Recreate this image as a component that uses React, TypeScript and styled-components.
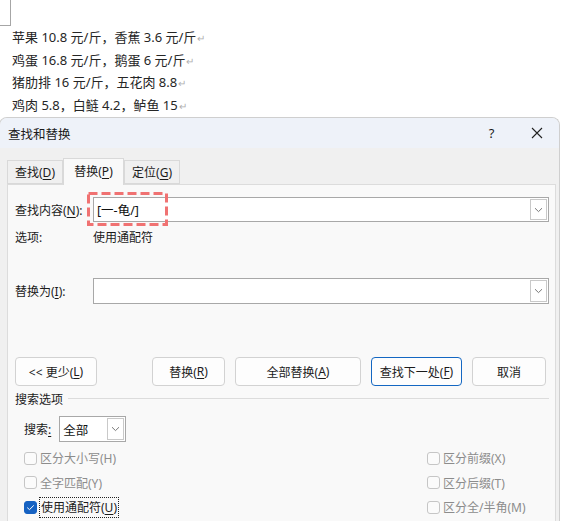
import styled, { createGlobalStyle } from 'styled-components';

const GlobalStyle = createGlobalStyle`
  html, body {
    margin: 0;
    padding: 0;
    background: #fff;
    overflow: hidden;
  }
  body {
    font-family: "Noto Sans", "Noto Sans CJK SC", sans-serif;
    color: #1b1b1b;
  }
  u {
    text-underline-offset: 2px;
  }
`;

const SDoc = styled.div`
  height: 117px;
  box-sizing: border-box;
`;

const SCorner = styled.div`
  width: 10px;
  height: 25px;
  border-right: 1px solid #a6a6a6;
  border-bottom: 1px solid #a6a6a6;
`;

const SLines = styled.div`
  padding-left: 12px;
  margin-top: 1px;
  font-size: 13px;
  line-height: 21.5px;
  color: #262626;
`;

const SReturn = styled.span`
  color: #b0b0b0;
  font-size: 10px;
  margin-left: 1px;
`;

const SDialog = styled.div`
  margin-left: -1px;
  width: 561px;
  height: 404px;
  box-sizing: border-box;
  border: 1px solid #cfcfcf;
  border-bottom: none;
  border-radius: 8px 8px 0 0;
  background: #f0f0f0;
  overflow: hidden;
  display: flex;
  flex-direction: column;
  font-size: 12px;
`;

const STitleBar = styled.div`
  height: 30px;
  flex: none;
  display: flex;
  align-items: center;
  padding-left: 8px;
  background: #eef2f9;
`;

const STitle = styled.div`
  flex: 1;
  font-size: 12.5px;
`;

const STitleBtn = styled.div`
  width: 45px;
  height: 30px;
  display: flex;
  align-items: center;
  justify-content: center;
  font-size: 13px;
`;

const SBody = styled.div`
  flex: 1;
  display: flex;
  flex-direction: column;
  padding: 10px 3px 0 7px;
  min-height: 0;
`;

const STabs = styled.div`
  display: flex;
  align-items: flex-end;
  height: 26px;
  flex: none;
`;

const STab = styled.div<{ $active?: boolean; $w: number }>`
  width: ${p => p.$w}px;
  box-sizing: border-box;
  height: ${p => (p.$active ? 27 : 24)}px;
  margin-bottom: ${p => (p.$active ? -1 : 0)}px;
  border: 1px solid #d9d9d9;
  border-bottom: ${p => (p.$active ? 'none' : '1px solid #d9d9d9')};
  background: ${p => (p.$active ? '#f9f9f9' : '#f0f0f0')};
  position: relative;
  z-index: ${p => (p.$active ? 1 : 0)};
  display: flex;
  align-items: center;
  justify-content: center;
  padding-bottom: ${p => (p.$active ? 2 : 0)}px;
`;

const SPanel = styled.div`
  flex: 1;
  background: #f9f9f9;
  border: 1px solid #dcdcdc;
  border-bottom: none;
  padding: 12px 6px 0 7px;
`;

const SFieldRow = styled.div<{ $top?: number }>`
  display: grid;
  grid-template-columns: 78px 1fr;
  align-items: center;
  margin-top: ${p => p.$top ?? 0}px;
`;

const SInput = styled.div<{ $h: number }>`
  position: relative;
  height: ${p => p.$h}px;
  box-sizing: border-box;
  border: 1px solid #a8a8a8;
  background: #fff;
  display: flex;
  align-items: center;
`;

const SInputText = styled.div`
  flex: 1;
  padding-left: 3px;
  font-size: 12.5px;
  color: #111;
`;

const SDropBtn = styled.div`
  width: 17px;
  align-self: stretch;
  margin: 1px;
  box-sizing: border-box;
  border: 1px solid #c9c9c9;
  background: #fff;
  display: flex;
  align-items: center;
  justify-content: center;
`;

const SHighlight = styled.svg`
  position: absolute;
  left: -7px;
  top: -6px;
  pointer-events: none;
`;

const SButtons = styled.div`
  display: flex;
  gap: 10px;
  margin-top: 53px;
`;

const SButton = styled.div<{ $w: number; $default?: boolean; $gapAfter?: number }>`
  width: ${p => p.$w}px;
  height: 29px;
  box-sizing: border-box;
  border: 1px solid ${p => (p.$default ? '#1467c2' : '#d2d2d2')};
  border-radius: 4px;
  background: #fdfdfd;
  display: flex;
  align-items: center;
  justify-content: center;
  margin-right: ${p => p.$gapAfter ?? 0}px;
`;

const SSection = styled.div`
  display: flex;
  align-items: center;
  gap: 5px;
  margin-top: 5px;
  height: 16px;
`;

const SRule = styled.div`
  flex: 1;
  height: 1px;
  background: #dcdcdc;
  margin-top: -2px;
`;

const SSearchRow = styled.div`
  display: flex;
  align-items: center;
  gap: 8px;
  margin-top: 9px;
  padding-left: 9px;
`;

const SSelect = styled.div`
  width: 67px;
  height: 26px;
  box-sizing: border-box;
  border: 1px solid #a8a8a8;
  background: #fff;
  display: flex;
  align-items: center;
`;

const SChecks = styled.div`
  display: grid;
  grid-template-columns: 403px 1fr;
  grid-auto-rows: 24.5px;
  padding-left: 9px;
  margin-top: 4px;
`;

const SCheckItem = styled.div<{ $disabled?: boolean }>`
  display: flex;
  align-items: center;
  gap: 3px;
  color: ${p => (p.$disabled ? '#8c8c8c' : '#1b1b1b')};
`;

const SBox = styled.div<{ $checked?: boolean }>`
  width: 13px;
  height: 13px;
  box-sizing: border-box;
  border-radius: 3px;
  border: 1px solid ${p => (p.$checked ? '#1662c2' : '#c6c6c6')};
  background: ${p => (p.$checked ? '#1662c2' : '#fbfbfb')};
  display: flex;
  align-items: center;
  justify-content: center;
`;

const SFocus = styled.span`
  outline: 1px dotted #222;
  padding: 1px 1px;
  line-height: 17px;
`;

const Chevron = () => (
  <svg width="9" height="6" viewBox="0 0 9 6">
    <path d="M1 1.2 L4.5 4.6 L8 1.2" fill="none" stroke="#6a6a6a" strokeWidth="0.9" />
  </svg>
);

const lines = [
  '苹果 10.8 元/斤，香蕉 3.6 元/斤',
  '鸡蛋 16.8 元/斤，鹅蛋 6 元/斤',
  '猪肋排 16 元/斤，五花肉 8.8',
  '鸡肉 5.8，白鲢 4.2，鲈鱼 15',
];

const Check = ({ label, checked, disabled, focus }: { label: React.ReactNode; checked?: boolean; disabled?: boolean; focus?: boolean }) => (
  <SCheckItem $disabled={disabled}>
    <SBox $checked={checked}>
      {checked && (
        <svg width="9" height="7" viewBox="0 0 9 7">
          <path d="M1.2 3.6 L3.5 5.6 L7.8 1.4" fill="none" stroke="#fff" strokeWidth="1" />
        </svg>
      )}
    </SBox>
    {focus ? <SFocus>{label}</SFocus> : <span>{label}</span>}
  </SCheckItem>
);

export default function App() {
  return (
    <>
      <GlobalStyle />
      <SDoc>
        <SCorner />
        <SLines>
          {lines.map(l => (
            <div key={l}>
              {l}
              <SReturn>↵</SReturn>
            </div>
          ))}
        </SLines>
      </SDoc>
      <SDialog>
        <STitleBar>
          <STitle>查找和替换</STitle>
          <STitleBtn>?</STitleBtn>
          <STitleBtn>
            <svg width="12" height="12" viewBox="0 0 12 12">
              <path d="M1 1 L11 11 M11 1 L1 11" stroke="#222" strokeWidth="1.1" />
            </svg>
          </STitleBtn>
        </STitleBar>
        <SBody>
          <STabs>
            <STab $w={56}>查找(<u>D</u>)</STab>
            <STab $w={61} $active>替换(<u>P</u>)</STab>
            <STab $w={56}>定位(<u>G</u>)</STab>
          </STabs>
          <SPanel>
            <SFieldRow>
              <span>查找内容(<u>N</u>):</span>
              <SInput $h={25}>
                <SInputText>[一-龟/]</SInputText>
                <SDropBtn><Chevron /></SDropBtn>
                <SHighlight width="81" height="34" viewBox="0 0 81 34">
                  <rect x="1.5" y="1.5" width="78" height="31" fill="none" stroke="#f07272" strokeWidth="3" strokeDasharray="9 4" />
                </SHighlight>
              </SInput>
            </SFieldRow>
            <SFieldRow $top={6}>
              <span>选项:</span>
              <span>使用通配符</span>
            </SFieldRow>
            <SFieldRow $top={32}>
              <span>替换为(<u>I</u>):</span>
              <SInput $h={26}>
                <SInputText />
                <SDropBtn><Chevron /></SDropBtn>
              </SInput>
            </SFieldRow>
            <SButtons>
              <SButton $w={82} $gapAfter={45}>&lt;&lt; 更少(<u>L</u>)</SButton>
              <SButton $w={73}>替换(<u>R</u>)</SButton>
              <SButton $w={126}>全部替换(<u>A</u>)</SButton>
              <SButton $w={91} $default>查找下一处(<u>F</u>)</SButton>
              <SButton $w={74}>取消</SButton>
            </SButtons>
            <SSection>
              <span>搜索选项</span>
              <SRule />
            </SSection>
            <SSearchRow>
              <span>搜索<u>:</u></span>
              <SSelect>
                <SInputText>全部</SInputText>
                <SDropBtn><Chevron /></SDropBtn>
              </SSelect>
            </SSearchRow>
            <SChecks>
              <Check disabled label="区分大小写(H)" />
              <Check disabled label="区分前缀(X)" />
              <Check disabled label="全字匹配(Y)" />
              <Check disabled label="区分后缀(T)" />
              <Check checked focus label={<>使用通配符(<u>U</u>)</>} />
              <Check disabled label="区分全/半角(M)" />
            </SChecks>
          </SPanel>
        </SBody>
      </SDialog>
    </>
  );
}
